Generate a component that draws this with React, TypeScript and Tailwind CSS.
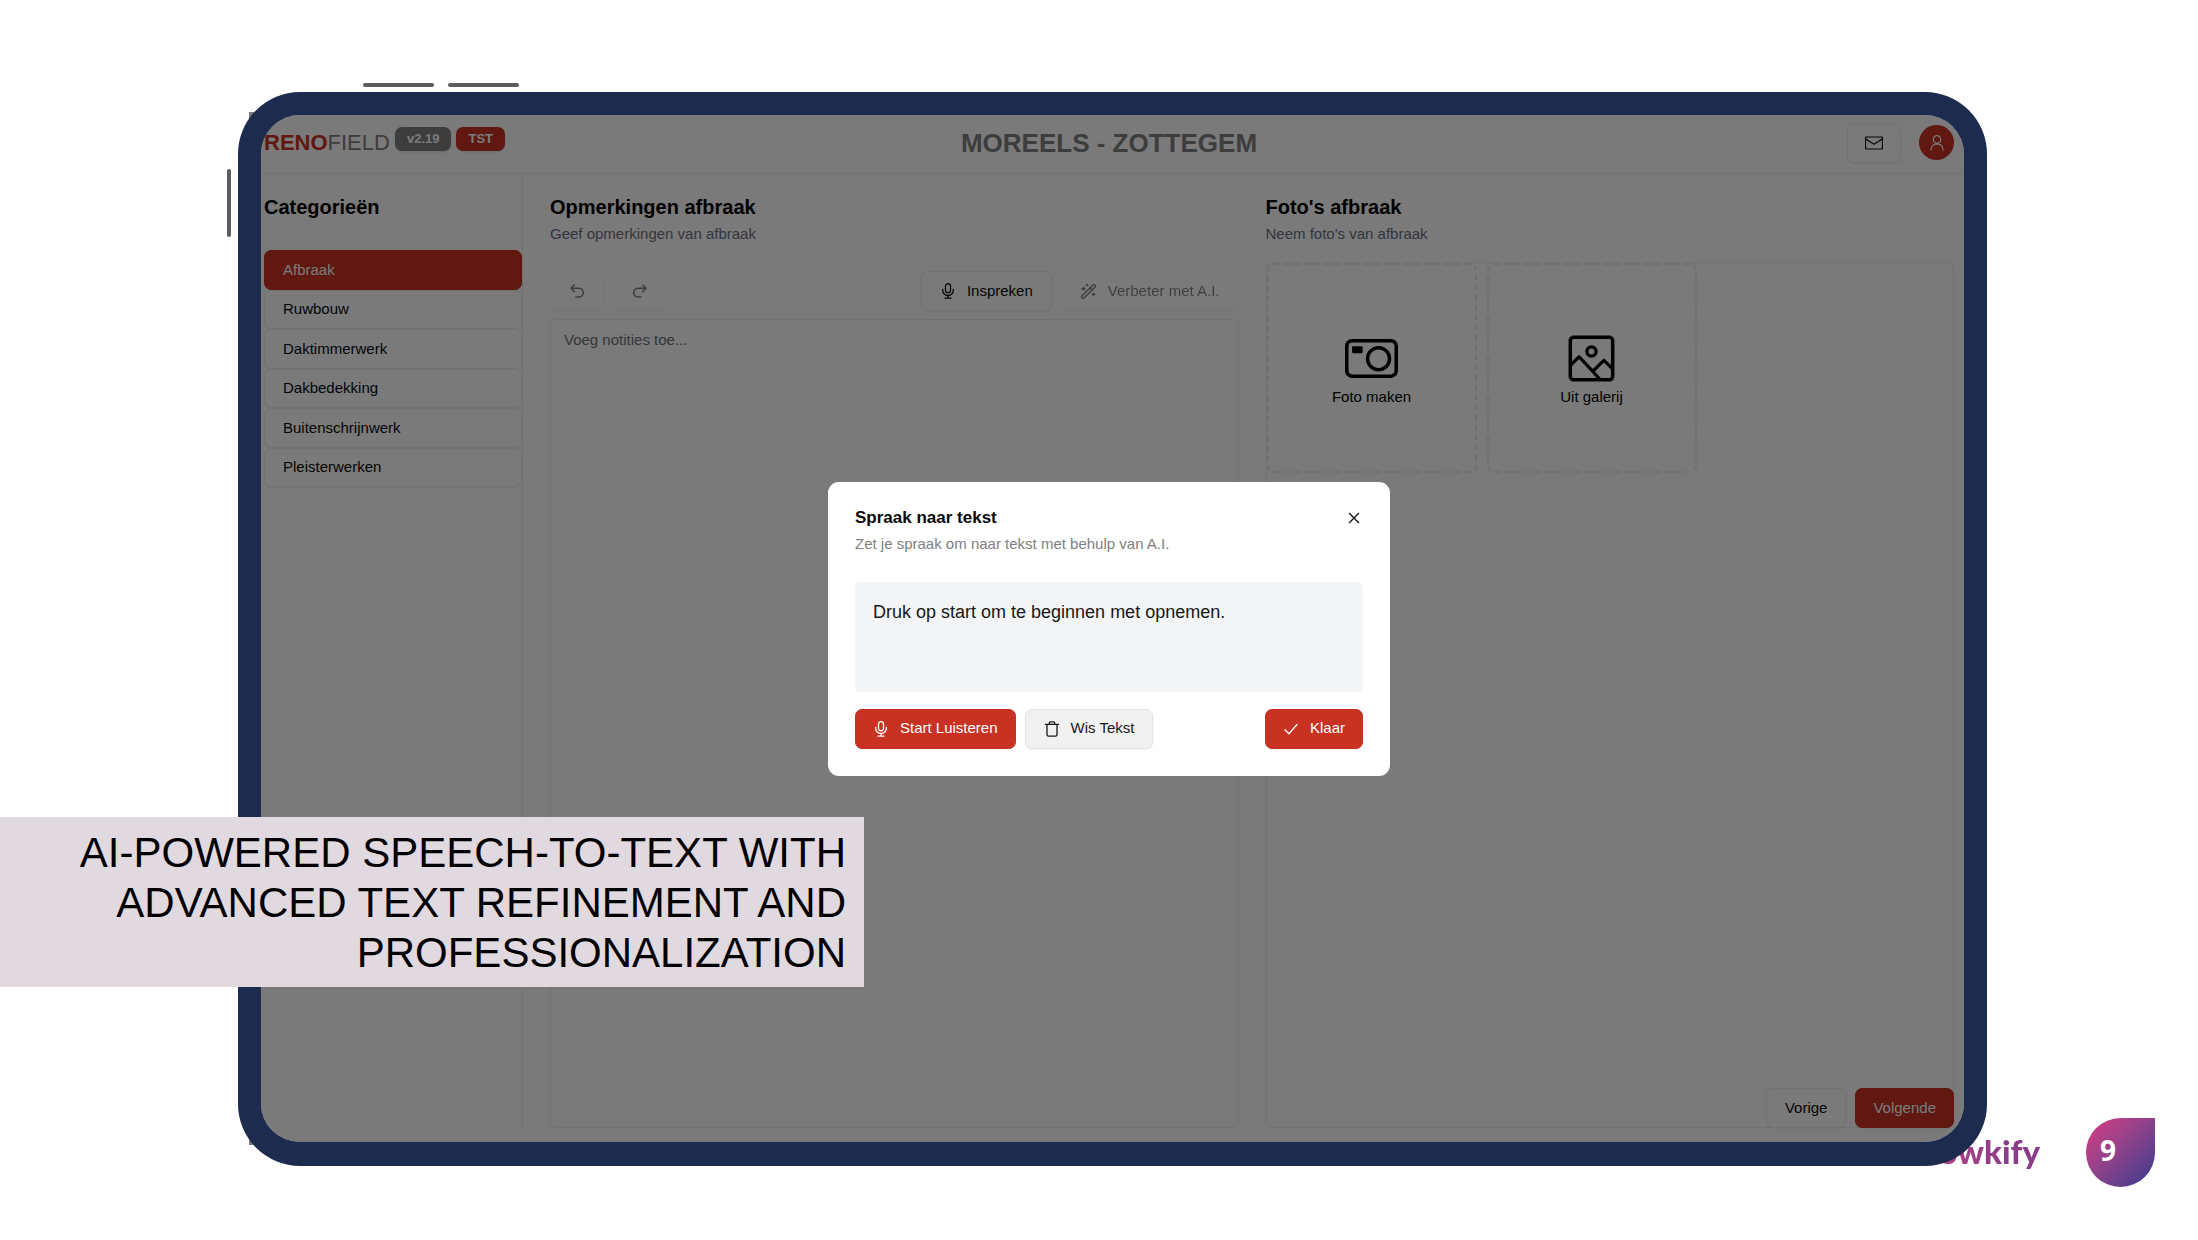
import { ReactNode } from 'react'
import { WandSparkles } from 'lucide-react'
import { RxCamera, RxCross2, RxEnvelopeClosed, RxImage, RxPerson } from 'react-icons/rx'

const categories = ['Afbraak', 'Ruwbouw', 'Daktimmerwerk', 'Dakbedekking', 'Buitenschrijnwerk', 'Pleisterwerken']

function Icon({ children, className = '' }: { children: ReactNode; className?: string }) {
  return (
    <svg viewBox="0 0 16 16" className={`size-4 shrink-0 ${className}`} fill="none" stroke="currentColor" strokeWidth="1.3" strokeLinecap="round" strokeLinejoin="round">
      {children}
    </svg>
  )
}

const undoPath = <path d="M5.2 2 2 5.3l3.2 3.3M2 5.3h7.9a4.3 4.3 0 0 1 0 8.7H7" strokeWidth="1.6" />

const micIcon = (
  <Icon>
    <rect x="5.5" y="0.7" width="5" height="9" rx="2.5" />
    <path d="M2.7 6.5v1a5.3 5 0 0 0 10.6 0v-1M8 12.5v2.5M5 15.2h6" />
  </Icon>
)

interface ButtonProps {
  children: ReactNode
  variant?: 'primary' | 'outline' | 'muted'
  className?: string
  disabled?: boolean
  label?: string
}

function Button({ children, variant = 'outline', className = '', disabled, label }: ButtonProps) {
  const styles = {
    primary: 'border-[#c83222] bg-[#c83222] px-[17px] text-white',
    outline: 'border-[#eeeeee] bg-white px-[18px] text-[#0a0a0a]',
    muted: 'border-[#e4e4e4] bg-[#f1f1f1] px-[18px] text-[#171717]',
  }
  return (
    <button
      type="button"
      aria-label={label}
      disabled={disabled}
      className={`flex h-10 shrink-0 items-center justify-center gap-[11px] rounded-[7px] border text-[15px] whitespace-nowrap shadow-xs disabled:opacity-50 ${styles[variant]} ${className}`}
    >
      {children}
    </button>
  )
}

function AppHeader() {
  return (
    <header className="grid h-[59px] grid-cols-[1fr_auto_1fr] items-center border-b border-[#eeeeee] pr-[10px] pb-[3px] pl-[3px]">
      <div className="flex items-center gap-[5px]">
        <span className="text-[22px] leading-7 text-[#808080]">
          <b className="text-[#c83222]">RENO</b>FIELD
        </span>
        <span className="mb-2 rounded-[7px] bg-[#808080] px-3 text-[13px] leading-6 font-bold text-white shadow-sm">v2.19</span>
        <span className="mb-2 rounded-[7px] bg-[#c83222] px-3 text-[13px] leading-6 font-bold text-white shadow-sm">TST</span>
      </div>
      <h1 className="text-[26px] leading-none font-bold text-[#808080]">MOREELS - ZOTTEGEM</h1>
      <div className="flex items-center justify-end gap-[18px]">
        <Button label="Berichten" className="w-[54px]">
          <RxEnvelopeClosed className="size-[18px] shrink-0" />
        </Button>
        <button type="button" aria-label="Profiel" className="flex size-[35px] items-center justify-center rounded-full bg-[#c83222] text-white">
          <RxPerson className="size-[18px]" />
        </button>
      </div>
    </header>
  )
}

function Sidebar() {
  return (
    <aside className="w-[259px] shrink-0 border-r border-[#eeeeee]">
      <h2 className="pt-[19px] text-[20px] leading-7 font-bold">Categorieën</h2>
      <nav className="mt-[29px] grid h-[237px] grid-rows-6">
        {categories.map((category, i) => (
          <button
            key={category}
            type="button"
            className={`rounded-[7px] border px-[18px] text-left text-[15px] shadow-xs ${
              i === 0 ? 'border-[#c83222] bg-[#c83222] text-white' : 'border-[#eeeeee] bg-white text-[#0a0a0a]'
            }`}
          >
            {category}
          </button>
        ))}
      </nav>
    </aside>
  )
}

function PanelTitle({ title, subtitle }: { title: string; subtitle: string }) {
  return (
    <div className="pt-[19px]">
      <h2 className="text-[20px] leading-7 font-bold">{title}</h2>
      <p className="mt-[2px] text-[15px] leading-[22px] text-[#6b7280]">{subtitle}</p>
    </div>
  )
}

function NotesPanel() {
  return (
    <section className="flex min-w-0 flex-1 flex-col">
      <PanelTitle title="Opmerkingen afbraak" subtitle="Geef opmerkingen van afbraak" />
      <div className="mt-[26px] flex gap-[9px]">
        <Button label="Ongedaan maken" disabled className="w-[54px]">
          <Icon>{undoPath}</Icon>
        </Button>
        <Button label="Opnieuw" disabled className="w-[54px]">
          <Icon className="-scale-x-100">{undoPath}</Icon>
        </Button>
        <Button className="ml-auto">
          {micIcon}
          Inspreken
        </Button>
        <Button disabled>
          <WandSparkles className="size-[17px]" />
          Verbeter met A.I.
        </Button>
      </div>
      <textarea
        aria-label="Notities"
        placeholder="Voeg notities toe..."
        className="mt-2 flex-1 resize-none rounded-[7px] border border-[#eeeeee] bg-white px-[13px] py-[9px] text-[15px] leading-[22px] placeholder:text-[#737373]"
      />
    </section>
  )
}

function PhotoTile({ icon, label }: { icon: ReactNode; label: string }) {
  return (
    <button type="button" className="flex size-[210px] flex-col items-center justify-center gap-px rounded-[7px] border-2 border-dashed border-[#ebebeb] pt-[3px] text-[15px]">
      {icon}
      <span className="leading-[22px]">{label}</span>
    </button>
  )
}

function PhotosPanel() {
  return (
    <section className="relative flex min-w-0 flex-1 flex-col">
      <PanelTitle title="Foto's afbraak" subtitle="Neem foto's van afbraak" />
      <div className="mt-[17px] flex flex-1 items-start gap-[10px] rounded-[7px] border border-[#eeeeee]">
        <PhotoTile icon={<RxCamera className="size-[53px]" />} label="Foto maken" />
        <PhotoTile icon={<RxImage className="size-[53px]" />} label="Uit galerij" />
      </div>
      <div className="absolute right-0 bottom-0 flex gap-[9px]">
        <Button>Vorige</Button>
        <Button variant="primary">Volgende</Button>
      </div>
    </section>
  )
}

function SpeechDialog() {
  return (
    <div role="dialog" aria-labelledby="speech-title" className="w-[562px] rounded-[11px] bg-white px-[27px] pt-[23px] pb-[27px]">
      <div className="flex items-center justify-between">
        <h2 id="speech-title" className="text-[17px] leading-[26px] font-bold text-[#0a0a0a]">
          Spraak naar tekst
        </h2>
        <button type="button" aria-label="Sluiten" className="text-[#171717]">
          <RxCross2 className="size-[18px]" />
        </button>
      </div>
      <p className="mt-[2px] text-[15px] leading-[22px] text-[#808080]">Zet je spraak om naar tekst met behulp van A.I.</p>
      <div className="mt-[27px] min-h-[110px] rounded-[5px] bg-[#f3f4f6] px-[18px] py-[17px] text-[18px] leading-[26px] text-[#171717]">
        Druk op start om te beginnen met opnemen.
      </div>
      <div className="mt-[17px] flex gap-[9px]">
        <Button variant="primary">
          {micIcon}
          Start Luisteren
        </Button>
        <Button variant="muted">
          <Icon className="h-[18px]">
            <path d="M1.5 3.3h13M5.3 3.3V2.2A1.3 1.3 0 0 1 6.6.9h2.8a1.3 1.3 0 0 1 1.3 1.3v1.1M3 3.3v10.2a1.6 1.6 0 0 0 1.6 1.6h6.8a1.6 1.6 0 0 0 1.6-1.6V3.3" />
          </Icon>
          Wis Tekst
        </Button>
        <Button variant="primary" className="ml-auto">
          <Icon>
            <path d="m2 8.7 3.9 4L14 3.5" />
          </Icon>
          Klaar
        </Button>
      </div>
    </div>
  )
}

function Tablet() {
  return (
    <div className="relative flex flex-1">
      {/* Hardware buttons */}
      <div className="absolute -top-[9px] left-[125px] flex gap-[14px]">
        <span className="h-1 w-[71px] rounded-full bg-[#5c5c5c]" />
        <span className="h-1 w-[71px] rounded-full bg-[#5c5c5c]" />
      </div>
      <span className="absolute top-[77px] -left-[11px] h-[68px] w-1 rounded-full bg-[#5c5c5c]" />
      {/* Screen edge behind the bezel */}
      <span className="absolute top-5 bottom-[21px] left-[11px] w-10 bg-[#7a7a7a]" />

      <div className="relative flex flex-1 overflow-hidden rounded-[62px] border-[23px] border-b-[24px] border-[#1d2b4f] bg-white">
        <div className="flex min-w-0 flex-1 flex-col">
          <AppHeader />
          <main className="flex flex-1 gap-[27px] pr-[10px] pb-[14px] pl-[3px]">
            <Sidebar />
            <NotesPanel />
            <PhotosPanel />
          </main>
        </div>
        <div className="absolute inset-0 flex items-center justify-center bg-black/52 pr-[7px]">
          <SpeechDialog />
        </div>
      </div>
    </div>
  )
}

export default function App() {
  return (
    <div className="relative flex min-h-screen flex-col overflow-hidden bg-white pt-[92px] pr-[211px] pb-[74px] pl-[238px] font-['Liberation_Sans',Arial,sans-serif] text-black">
      <footer className="absolute right-[43px] bottom-[53px] flex items-center gap-[46px]">
        <span className="mb-1 bg-linear-to-r from-[#c43d86] to-[#8a3d88] to-75% bg-clip-text font-['Lato',sans-serif] text-[33px] leading-10 font-black text-transparent">
          Flowkify
        </span>
        <span className="flex size-[69px] items-center rounded-full rounded-tr-none bg-linear-to-br from-[#c43d86] from-15% to-[#46398c] to-90% pb-[5px] pl-[14px] font-['Open_Sans',sans-serif] text-[28px] leading-none font-bold text-white">
          9
        </span>
      </footer>

      <Tablet />

      <div className="absolute top-[817px] left-0 w-[864px] bg-[#e0d9e0] pt-[11px] pr-[18px] pb-[9px] pl-16 text-right text-[42px] leading-[50px] text-black">
        <p>
          AI-POWERED SPEECH-TO-TEXT WITH
          <br />
          ADVANCED TEXT REFINEMENT AND
          <br />
          PROFESSIONALIZATION
        </p>
      </div>
    </div>
  )
}
